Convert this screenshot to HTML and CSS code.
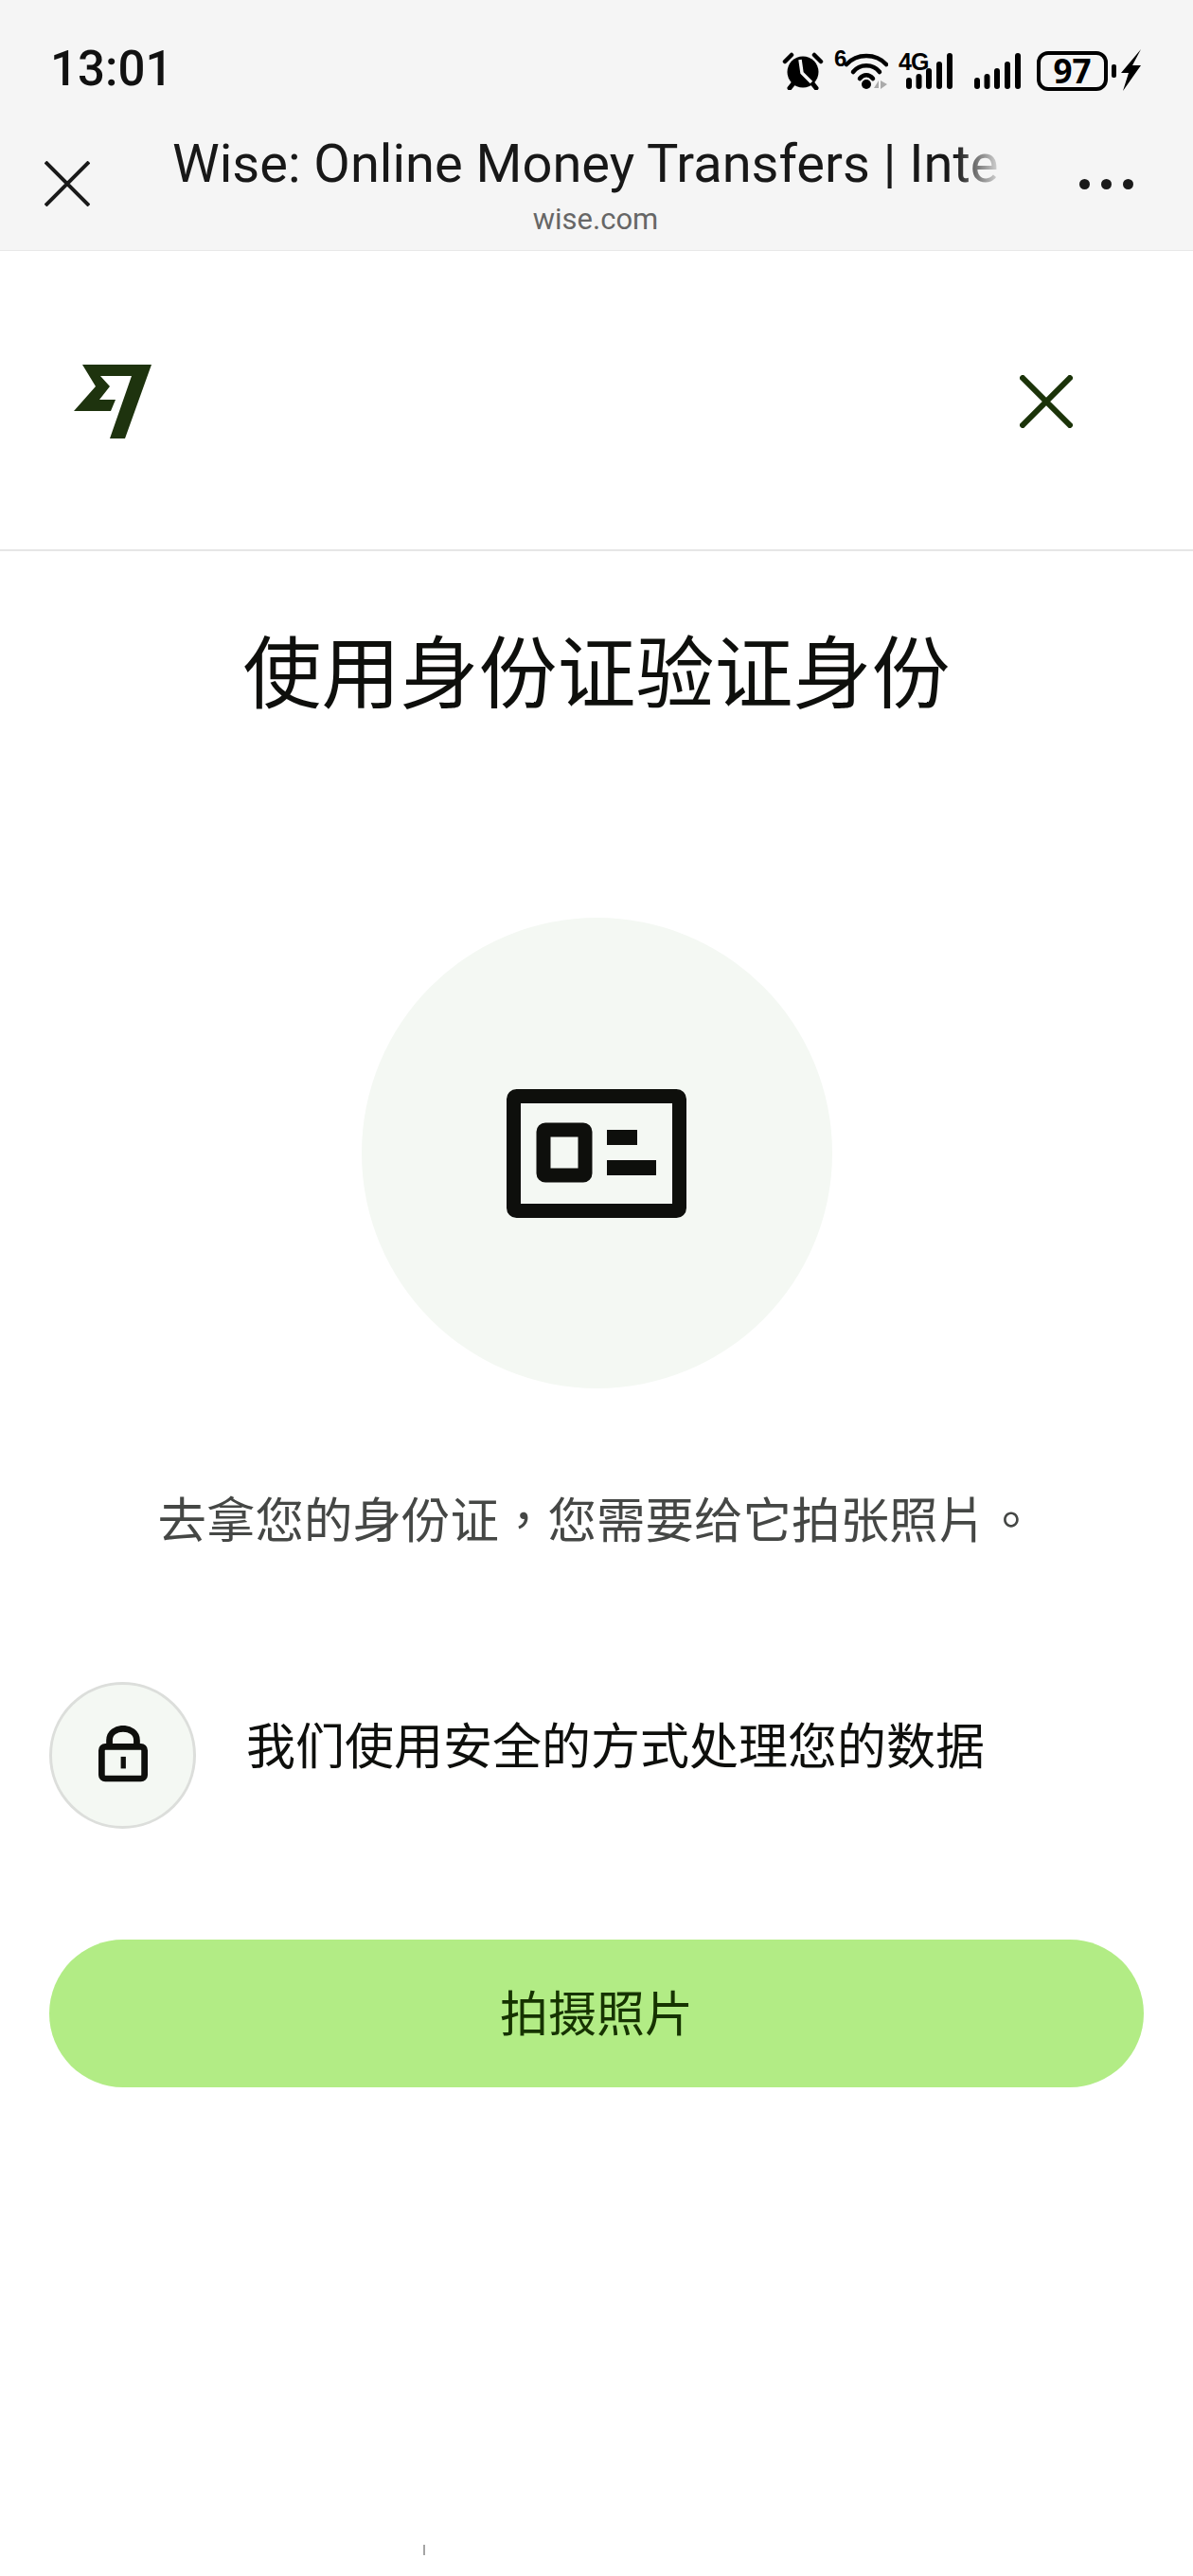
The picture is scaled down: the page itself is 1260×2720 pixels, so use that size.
FILE: index.html
```html
<!DOCTYPE html>
<html lang="zh-CN">
<head>
<meta charset="UTF-8" />
<meta name="viewport" content="width=device-width, initial-scale=1" />
<title>Wise: Online Money Transfers</title>
<link rel="stylesheet" href="styles.css">
</head>
<body>

<div class="chrome">
  <div class="status-bar">
    <span class="clock">13:01</span>
    <div class="status-icons">
      <svg class="ic-alarm" width="44" height="40" viewBox="0 0 44 40">
        <path d="M3 10 L10 3 M41 10 L34 3" stroke="#000" stroke-width="4.5" stroke-linecap="round"/>
        <circle cx="22" cy="21" r="16.5" fill="#000"/>
        <path d="M8 38 L12 33 M36 38 L32 33" stroke="#000" stroke-width="5" stroke-linecap="round"/>
        <path d="M19 8 L21 22 L31 32" fill="none" stroke="#f5f5f5" stroke-width="3.5"/>
      </svg>
      <div class="ic-wifi">
        <span class="tiny-six">6</span>
        <svg width="46" height="42" viewBox="0 0 46 42">
          <path d="M2 15 C13 3 33 3 44 15" fill="none" stroke="#000" stroke-width="4.5" stroke-linecap="round"/>
          <path d="M9 23 C16 14 30 14 37 23" fill="none" stroke="#000" stroke-width="4.5" stroke-linecap="round"/>
          <path d="M16 30 C20 25 26 25 30 30" fill="none" stroke="#000" stroke-width="4.5" stroke-linecap="round"/>
          <circle cx="23" cy="36" r="5" fill="#000"/>
          <path d="M31 40 L36 32 L36 40 Z M38 32 L45 36 L38 41 Z" fill="#aaa"/>
        </svg>
      </div>
      <div class="ic-signal">
        <span class="tiny-4g">4G</span>
        <svg width="50" height="40" viewBox="0 0 50 40">
          <rect x="0" y="27" width="6" height="12" rx="3"/>
          <rect x="10.500" y="23" width="6" height="16" rx="3"/>
          <rect x="21" y="17" width="6" height="22" rx="3"/>
          <rect x="32" y="10" width="6" height="29" rx="3"/>
          <rect x="43" y="1" width="6" height="38" rx="3"/>
        </svg>
      </div>
      <svg class="ic-signal-two" width="50" height="40" viewBox="0 0 50 40">
        <rect x="0" y="27" width="6" height="12" rx="3"/>
        <rect x="10.500" y="23" width="6" height="16" rx="3"/>
        <rect x="21" y="17" width="6" height="22" rx="3"/>
        <rect x="32" y="10" width="6" height="29" rx="3"/>
        <rect x="43" y="1" width="6" height="38" rx="3"/>
      </svg>
      <div class="battery"><span>97</span></div>
      <span class="battery-nub"></span>
      <svg class="ic-bolt" width="22" height="44" viewBox="0 0 22 44">
        <path d="M21 0 L0 25 L8 25 L2 44 L21 17 L12 17 Z" fill="#000"/>
      </svg>
    </div>
  </div>
  <div class="toolbar">
    <svg class="tb-close" width="48" height="48" viewBox="0 0 48 48">
      <path d="M1 1 L47 47 M47 1 L1 47" stroke="#1a1a1a" stroke-width="4"/>
    </svg>
    <div class="tb-title">
      <div class="tb-name">Wise: Online Money Transfers | Inte</div>
      <div class="tb-host">wise.com</div>
    </div>
    <div class="tb-more"><i></i><i></i><i></i></div>
  </div>
</div>

<header class="top">
  <svg class="logo" width="82" height="78" viewBox="78 385 82 78">
    <path d="M87 385 L160 385 L132 463 L116 463 L139 397 L106 397 L116 408 L105 422 L122 422 L117 434 L78 434 L101 408 Z" fill="#1e330e"/>
  </svg>
  <svg class="top-close" width="56" height="56" viewBox="0 0 56 56">
    <path d="M1 1 L55 55 M55 1 L1 55" stroke="#1b3309" stroke-width="6"/>
  </svg>
</header>

<main class="content">
  <h1 class="heading">使用身份证验证身份</h1>

  <div class="hero">
    <svg width="190" height="136" viewBox="0 0 190 136">
      <rect x="7.500" y="7.500" width="175" height="121" rx="3" fill="none" stroke="#0e0f0c" stroke-width="15"/>
      <rect x="39" y="43" width="44" height="48" rx="2" fill="none" stroke="#0e0f0c" stroke-width="15"/>
      <rect x="106" y="43" width="32" height="16" fill="#0e0f0c"/>
      <rect x="106" y="75" width="52" height="16" fill="#0e0f0c"/>
    </svg>
  </div>

  <p class="intro" lang="zh-TW">去拿您的身份证，您需要给它拍张照片。</p>

  <div class="note">
    <div class="note-icon">
      <svg width="52" height="60" viewBox="0 0 54 60">
        <path d="M12 22 V15 C12 -2 42 -2 42 15 V22" fill="none" stroke="#0e0f0c" stroke-width="7"/>
        <rect x="3.500" y="22" width="47" height="35" rx="4" fill="none" stroke="#0e0f0c" stroke-width="7"/>
        <rect x="24.500" y="33" width="5.500" height="13" fill="#0e0f0c"/>
      </svg>
    </div>
    <span class="note-text">我们使用安全的方式处理您的数据</span>
  </div>

  <button class="cta">拍摄照片</button>
</main>

<span class="home-tick"></span>

</body>
</html>
```

FILE: styles.css
```css
body {
  margin: 0;
  height: 2720px;
  overflow: hidden;
  background: #fff;
  color: #0e0f0c;
  font-family: "Noto Sans CJK SC", sans-serif;
  position: relative;
}

/* browser chrome */
.chrome {
  height: 265px;
  background: #f5f5f5;
  border-bottom: 1px solid #e8e8e8;
  box-sizing: border-box;
  font-family: Roboto, "Open Sans", sans-serif;
}
.status-bar {
  height: 134px;
  padding: 0 54px 0 53px;
  display: flex;
  align-items: flex-start;
  justify-content: space-between;
}
.clock {
  margin-top: 47px;
  font-size: 51px;
  line-height: 52px;
  font-weight: 500;
  color: #111;
}
.status-icons {
  margin-top: 52px;
  display: flex;
  align-items: flex-start;
}
.ic-alarm {
  margin: 3px 0 0 0;
}
.ic-wifi {
  display: flex;
  margin-left: 11px;
  align-items: flex-start;
}
.tiny-six {
  font-size: 24px;
  line-height: 20px;
  font-weight: 700;
  width: 11px;
  color: #000;
  font-family: "Liberation Sans", sans-serif;
}
.ic-wifi svg {
  margin-top: 1px;
}
.ic-signal {
  display: flex;
  margin-left: 11px;
  width: 58px;
  position: relative;
  justify-content: flex-end;
}
.tiny-4g {
  position: absolute;
  left: 0;
  top: 3px;
  font-size: 25px;
  line-height: 20px;
  font-weight: 700;
  letter-spacing: -1px;
  color: #000;
  font-family: "Liberation Sans", sans-serif;
}
.ic-signal svg {
  margin-top: 3px;
}
.ic-signal-two {
  margin: 3px 0 0 22px;
}
.battery {
  margin: 2px 0 0 16px;
  width: 75px;
  height: 42px;
  box-sizing: border-box;
  border: 4px solid #000;
  border-radius: 12px;
  display: flex;
  align-items: center;
  justify-content: center;
}
.battery span {
  font-size: 35px;
  line-height: 34px;
  font-weight: 700;
  color: #000;
  font-family: "Open Sans", sans-serif;
}
.battery-nub {
  margin: 16px 0 0 4px;
  width: 5px;
  height: 14px;
  border-radius: 2px;
  background: #000;
}
.ic-bolt {
  margin-left: 5px;
}

.toolbar {
  height: 130px;
  display: flex;
  align-items: flex-start;
  padding: 0 63px 0 47px;
}
.tb-close {
  margin-top: 36px;
}
.tb-title {
  margin-left: 87px;
  width: 880px;
  text-align: center;
}
.tb-name {
  font-size: 56px;
  line-height: 66px;
  color: #181818;
  white-space: nowrap;
  text-align: left;
  -webkit-mask-image: linear-gradient(to right, #000 94%, transparent 100%);
  mask-image: linear-gradient(to right, #000 94%, transparent 100%);
  margin-top: 6px;
}
.tb-host {
  font-size: 31px;
  line-height: 34px;
  color: #666;
  margin-top: 9px;
  padding-left: 14px;
}
.tb-more {
  margin: 55px 0 0 auto;
  display: flex;
  gap: 12px;
}
.tb-more i {
  width: 11px;
  height: 11px;
  border-radius: 50%;
  background: #1a1a1a;
}

/* wise page */
.top {
  height: 317px;
  border-bottom: 2px solid #e6e6e6;
  box-sizing: border-box;
  padding: 120px 127px 0 78px;
  display: flex;
  justify-content: space-between;
  align-items: flex-start;
}
.top-close {
  margin-top: 11px;
}
.content {
  display: flex;
  flex-direction: column;
  align-items: center;
  padding: 0 52px;
}
.heading {
  margin: 65px 0 0;
  font-size: 83px;
  line-height: 116px;
  font-weight: 400;
  color: #0e0f0c;
}
.hero {
  margin-top: 206px;
  width: 497px;
  height: 497px;
  border-radius: 50%;
  background: #f4f8f3;
  display: flex;
  align-items: center;
  justify-content: center;
}
.intro {
  margin: 98px 0 0;
  font-family: "Noto Sans CJK TC", sans-serif;
  font-size: 51.500px;
  line-height: 76px;
  color: #454745;
}
.note {
  margin-top: 136px;
  width: 100%;
  display: flex;
  align-items: center;
  gap: 53px;
}
.note-icon {
  width: 155px;
  height: 155px;
  box-sizing: border-box;
  border: 3px solid #dcdedb;
  border-radius: 50%;
  background: #f4f8f3;
  display: flex;
  align-items: center;
  justify-content: center;
}
.note-icon svg {
  margin-bottom: 3px;
}
.note-text {
  font-size: 52px;
  line-height: 76px;
  margin-top: -26px;
}
.cta {
  margin-top: 117px;
  width: 100%;
  height: 156px;
  border: 0;
  border-radius: 78px;
  background: #b2ec85;
  color: #163300;
  font-family: inherit;
  font-size: 51px;
  padding: 0 0 6px;
}
.home-tick {
  position: absolute;
  left: 447px;
  top: 2687px;
  width: 2px;
  height: 11px;
  background: #a5a5a5;
}
```
